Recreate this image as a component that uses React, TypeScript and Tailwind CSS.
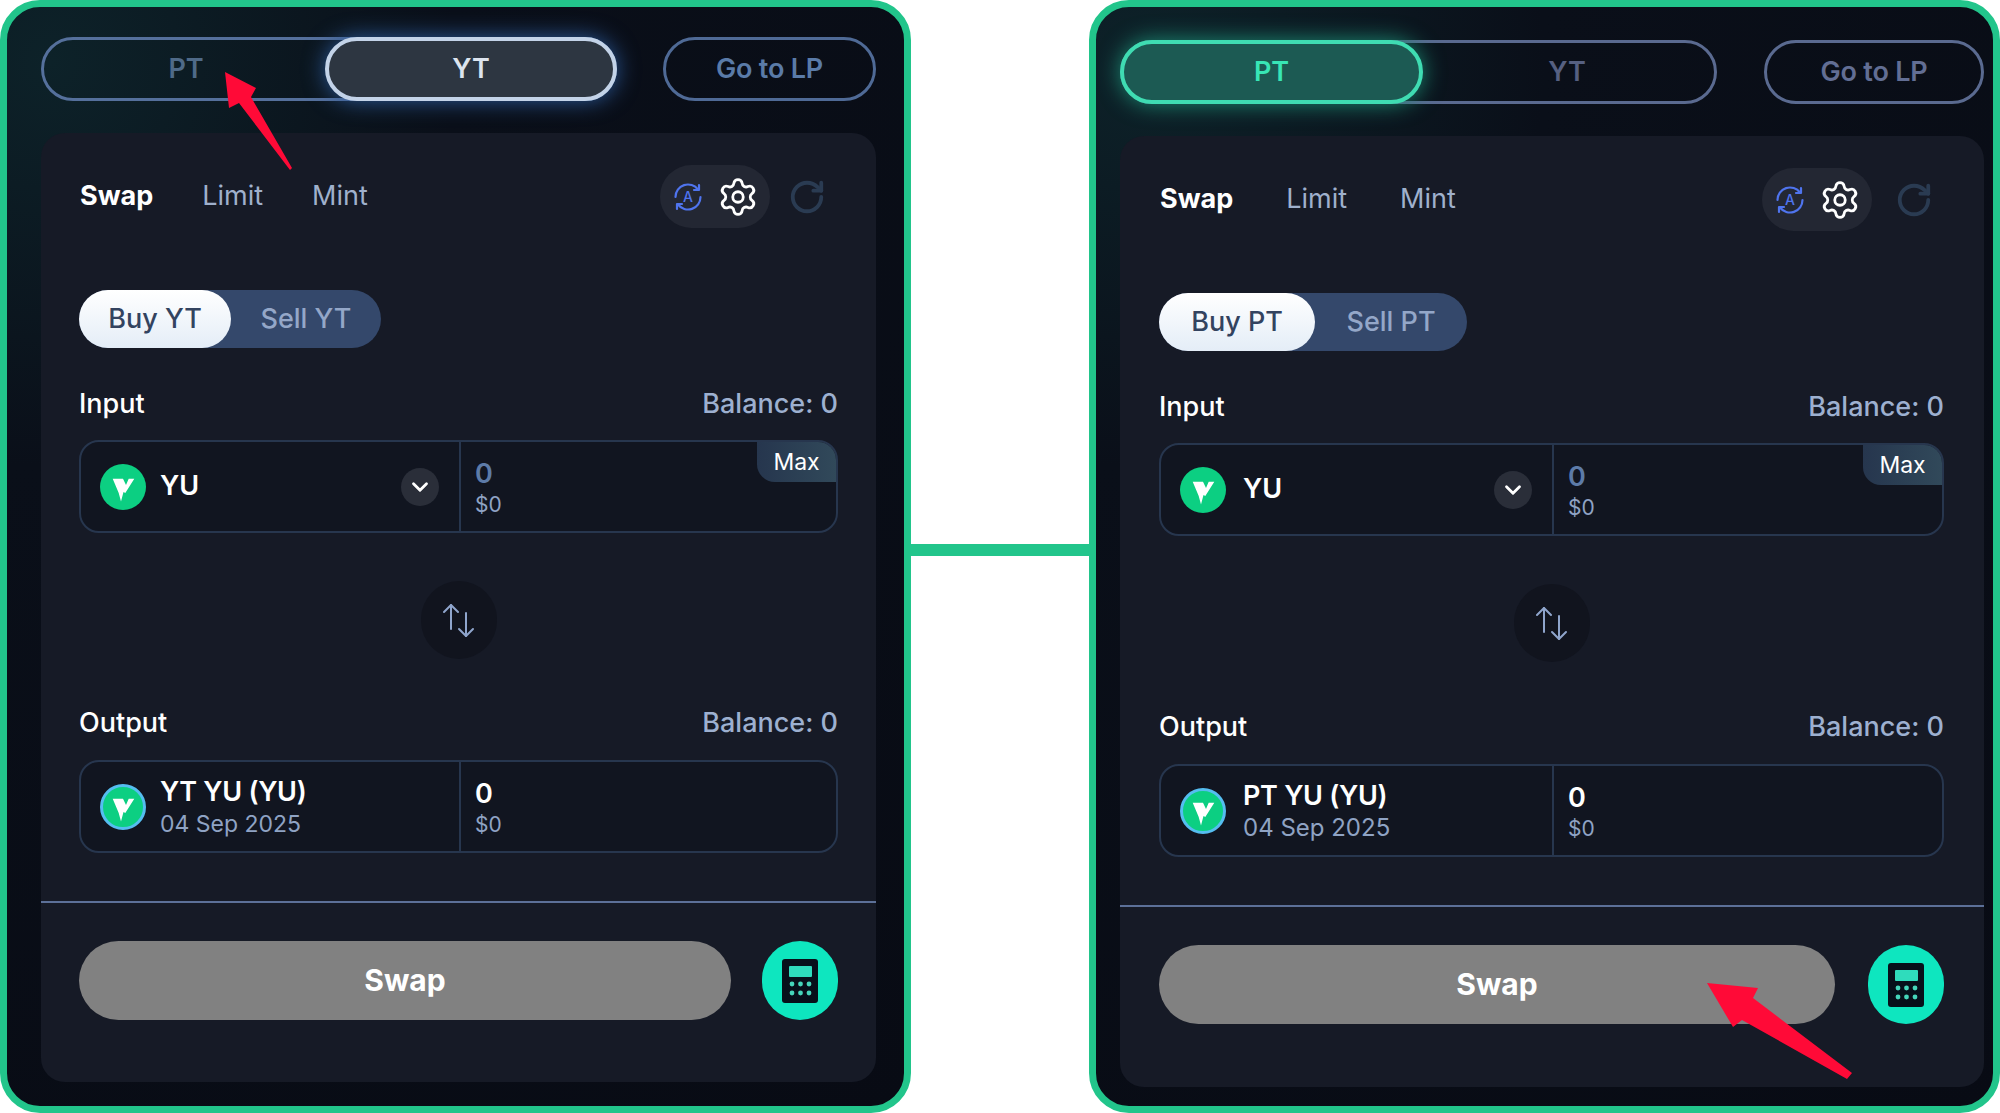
import { ChevronDown, RotateCw, Settings } from 'lucide-react'

type PanelProps = {
  kind: 'PT' | 'YT'
  frame: string
  cardWidth: string
  cardPad: string
  toggleWidth: string
  pillWidth: string
  goWidth: string
  tabGap: string
  iconGap: string
  rowPad: string
  segWidth: string
  buyWidth: string
  leftCol: string
  btnWidth: string
  outputGap: string
  nameGap: string
  dateSize: string
}

const YuLogo = ({ ring = false }: { ring?: boolean }) => (
  <svg viewBox="0 0 46 46" className="w-[46px] h-[46px] shrink-0">
    <circle cx="23" cy="23" r={ring ? 21.5 : 23} fill="#0ccf82" stroke={ring ? '#55bdf0' : 'none'} strokeWidth={ring ? 3 : 0} />
    <path d="M12.7 14.7H23L26 21L28.7 14.7H34.3L25.3 29L23.5 28L21 37.6L18.7 29Z" fill="#fff" />
  </svg>
)

const AutoIcon = () => (
  <svg viewBox="0 0 32 32" className="w-[32px] h-[32px]" fill="none" stroke="#4f74ee" strokeWidth="2.2" strokeLinecap="round" strokeLinejoin="round">
    <path d="M3.5 16A12.5 12.5 0 0 1 26 8.5" />
    <path d="M27 4v5h-5" />
    <path d="M28.5 16A12.5 12.5 0 0 1 6 23.5" />
    <path d="M5 28v-5h5" />
    <text x="16" y="21" textAnchor="middle" fontSize="14" fontWeight="500" fill="#4f74ee" stroke="none" fontFamily="Inter, sans-serif">A</text>
  </svg>
)

const SwapArrows = () => (
  <svg viewBox="0 0 32 35" className="w-[32px] h-[35px]" fill="none" stroke="#8fa5cc" strokeWidth="2" strokeLinecap="round" strokeLinejoin="round">
    <path d="M8 2V26" />
    <path d="M1 9L8 2L15 9" />
    <path d="M23 10V33" />
    <path d="M16 26L23 33L30 26" />
  </svg>
)

const CalcIcon = () => (
  <svg viewBox="0 0 36 44" className="w-[36px] h-[44px]">
    <rect x="0" y="0" width="36" height="44" rx="3" fill="#07101a" />
    <rect x="7" y="7" width="23" height="11" rx="1" fill="#2fdcbc" />
    {[25, 34].map((y) =>
      [10, 18.5, 27].map((x) => <circle key={`${x}-${y}`} cx={x} cy={y} r="2.4" fill="#45d6ba" />)
    )}
  </svg>
)

const TokenBox = ({ leftCol, children, value, valueClass, max }: { leftCol: string; children: React.ReactNode; value: string; valueClass: string; max?: boolean }) => (
  <div className={`relative grid ${leftCol} h-[93px] rounded-[20px] border-2 border-[#27364e] bg-[#111520] overflow-hidden`}>
    <div className="flex items-center pl-[19px] pr-[20px] border-r-2 border-[#27364e]">{children}</div>
    <div className="flex flex-col justify-center pl-[14px] pt-[2px]">
      <span className={`text-[27px] leading-[34px] font-semibold ${valueClass}`}>{value}</span>
      <span className="text-[21px] leading-[28px] text-[#8fa3c4]">$0</span>
    </div>
    {max && (
      <div className="absolute top-0 right-0 w-[79px] h-[40px] flex items-center justify-center rounded-bl-[18px] bg-gradient-to-r from-[#26364e] to-[#31495a] text-[23px] text-white">
        Max
      </div>
    )}
  </div>
)

const Panel = (p: PanelProps) => {
  const isPt = p.kind === 'PT'
  return (
    <div className={`flex flex-col w-[911px] h-[1113px] shrink-0 border-[7px] border-[#22c58b] rounded-[40px] gap-[32px] ${p.frame} bg-[radial-gradient(circle_at_5%_5%,#0d2229_0%,#0a0f19_30%,#080b14_100%)]`}>
      <div className="flex justify-between items-center h-[64px]">
        <div className={`flex ${p.toggleWidth} h-[64px] rounded-full border-[3px] ${isPt ? 'border-[#5a6a90]' : 'border-[#55709c]'} text-[27px] font-semibold`}>
          {isPt ? (
            <>
              <div className={`${p.pillWidth} -m-[3px] pt-[1px] flex items-center justify-center rounded-full border-[4px] border-[#3fdcb2] bg-[#1c5a53] text-[#38e6b6] shadow-[0_0_22px_#1c8a73]`}>PT</div>
              <div className="flex-1 flex items-center justify-center text-[#566081] pt-[1px]">YT</div>
            </>
          ) : (
            <>
              <div className="flex-1 flex items-center justify-center text-[#4f6a88] pt-[1px]">PT</div>
              <div className={`${p.pillWidth} -m-[3px] pt-[1px] flex items-center justify-center rounded-full border-[4px] border-[#c3d3e8] bg-[#2d3641] text-[#dce4ee] shadow-[0_0_22px_#2c5a9a]`}>YT</div>
            </>
          )}
        </div>
        <div className={`${p.goWidth} h-[64px] pt-[1px] flex items-center justify-center rounded-full border-[3px] ${isPt ? 'border-[#5a6a90] text-[#626e94]' : 'border-[#4f6a96] text-[#5a7ba8]'} text-[27px] font-semibold tracking-[-0.2px]`}>
          Go to LP
        </div>
      </div>

      <div className={`flex flex-col flex-1 ${p.cardWidth} rounded-[24px] bg-[#161a26]`}>
        <div className={`flex flex-col ${p.cardPad} pt-[32px]`}>
          <div className={`flex items-center justify-between h-[63px] ${p.rowPad}`}>
            <div className={`flex items-center pl-[1px] ${p.tabGap} text-[27px]`}>
              <span className="font-bold text-white">Swap</span>
              <span className="text-[#9fb0cc]">Limit</span>
              <span className="text-[#9fb0cc]">Mint</span>
            </div>
            <div className={`flex items-center ${p.iconGap}`}>
              <div className="flex items-center justify-center gap-[13px] w-[110px] h-[63px] rounded-full bg-[#232733]">
                <AutoIcon />
                <Settings className="w-[42px] h-[42px] text-white" strokeWidth={1.6} />
              </div>
              <RotateCw className="w-[38px] h-[38px] text-[#2a3b52]" strokeWidth={2.4} />
            </div>
          </div>

          <div className={`flex ${p.segWidth} h-[58px] mt-[62px] rounded-full bg-[#34486b] text-[27px]`}>
            <div className={`${p.buyWidth} flex items-center justify-center rounded-full bg-gradient-to-b from-white to-[#e4edf7] text-[#33435f] font-medium`}>Buy {p.kind}</div>
            <div className="flex-1 flex items-center justify-center text-[#94a7c8] font-medium">Sell {p.kind}</div>
          </div>

          <div className="flex items-center justify-between h-[30px] mt-[41px] text-[27px]">
            <span className="text-white font-medium">Input</span>
            <span className="text-[#9db0d0] font-medium">Balance: 0</span>
          </div>
          <div className="mt-[21px]">
            <TokenBox leftCol={p.leftCol} value="0" valueClass="text-[#5d7ba8]" max>
              <YuLogo />
              <span className={`${p.nameGap} text-white text-[27px] font-semibold`}>YU</span>
              <span className="ml-auto w-[38px] h-[38px] rounded-full bg-[#2a2e39] flex items-center justify-center">
                <ChevronDown className="w-[26px] h-[26px] text-white" strokeWidth={2.6} />
              </span>
            </TokenBox>
          </div>

          <div className="self-center mt-[48px] w-[76px] h-[78px] rounded-full bg-[#11141e] flex items-center justify-center">
            <SwapArrows />
          </div>

          <div className={`flex items-center justify-between h-[30px] ${p.outputGap} text-[27px]`}>
            <span className="text-white font-medium">Output</span>
            <span className="text-[#9db0d0] font-medium">Balance: 0</span>
          </div>
          <div className="mt-[22px]">
            <TokenBox leftCol={p.leftCol} value="0" valueClass="text-white">
              <YuLogo ring />
              <div className={`${p.nameGap} flex flex-col`}>
                <span className="text-white text-[27px] leading-[34px] font-semibold tracking-[-0.3px]">{p.kind} YU (YU)</span>
                <span className={`text-[#8fa3c4] ${p.dateSize} leading-[30px]`}>04 Sep 2025</span>
              </div>
            </TokenBox>
          </div>
        </div>

        <div className="mt-[48px] h-[2px] bg-[#5c7098]" />

        <div className={`flex justify-between ${p.cardPad} mt-[38px]`}>
          <div className={`${p.btnWidth} h-[79px] rounded-full bg-[#818181] flex items-center justify-center text-white text-[30px] font-bold`}>Swap</div>
          <div className="w-[76px] h-[79px] rounded-full bg-[#0ee6bf] flex items-center justify-center">
            <CalcIcon />
          </div>
        </div>
      </div>
    </div>
  )
}

const App = () => {
  return (
    <div className="relative flex w-[2000px] h-[1113px] bg-white overflow-hidden [font-family:Inter,sans-serif]">
      <Panel
        kind="YT"
        frame="pl-[34px] pr-[28px] pt-[30px] pb-[24px]"
        cardWidth="w-[835px]"
        cardPad="pl-[38px] pr-[38px]"
        toggleWidth="w-[576px]"
        pillWidth="w-[292px]"
        goWidth="w-[213px]"
        tabGap="gap-[49px]"
        iconGap="gap-[18px]"
        rowPad="pr-[12px]"
        segWidth="w-[302px]"
        buyWidth="w-[152px]"
        leftCol="grid-cols-[380px_1fr]"
        btnWidth="w-[652px]"
        outputGap="mt-[49px]"
        nameGap="ml-[14px]"
        dateSize="text-[23px]"
      />
      <div className="flex-1 flex items-center pb-[13px]">
        <div className="w-full h-[12px] bg-[#22c58b]" />
      </div>
      <Panel
        kind="PT"
        frame="pl-[24px] pr-[9px] pt-[33px] pb-[19px]"
        cardWidth="w-[864px]"
        cardPad="pl-[39px] pr-[40px]"
        toggleWidth="w-[597px]"
        pillWidth="w-[303px]"
        goWidth="w-[220px]"
        tabGap="gap-[53px]"
        iconGap="gap-[23px]"
        rowPad="pr-[11px]"
        segWidth="w-[308px]"
        buyWidth="w-[156px]"
        leftCol="grid-cols-[393px_1fr]"
        btnWidth="w-[676px]"
        outputGap="mt-[50px]"
        nameGap="ml-[17px]"
        dateSize="text-[24px]"
      />
      {/* annotation arrows drawn over the screenshot */}
      <svg className="absolute inset-0 w-[2000px] h-[1113px] pointer-events-none" viewBox="0 0 2000 1113">
        <polygon points="225,72 256,88 251,97 292,168 290,170 239,103 229,108" fill="#ff0a37" />
        <polygon points="1707,983 1758,988 1753,998 1852,1073 1847,1079 1742,1020 1733,1027" fill="#ff0a37" />
      </svg>
    </div>
  )
}

export default App
